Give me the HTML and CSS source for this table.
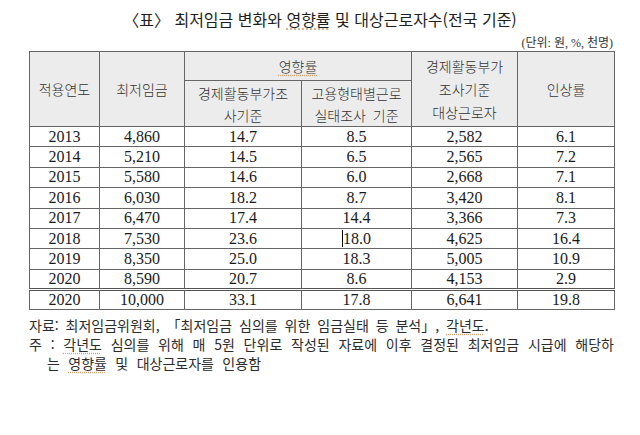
FILE: index.html
```html
<!DOCTYPE html>
<html lang="ko">
<head>
<meta charset="utf-8">
<link rel="stylesheet" href="styles.css">
</head>
<body>
<div class="page">
  <h1 class="title">〈표〉 최저임금 변화와 <span class="sp">영향률</span> 및 대상근로자수(전국 기준)</h1>
  <div class="unit">(단위: 원, %, 천명)</div>
  <table class="data">
    <colgroup>
      <col class="c1"><col class="c2"><col class="c3"><col class="c4"><col class="c5"><col class="c6">
    </colgroup>
    <thead>
      <tr class="h1">
        <th rowspan="2">적용연도</th>
        <th rowspan="2">최저임금</th>
        <th colspan="2"><span class="sp">영향률</span></th>
        <th rowspan="2">경제활동부가<br>조사기준<br>대상근로자</th>
        <th rowspan="2">인상률</th>
      </tr>
      <tr class="h2">
        <th>경제활동부가조<br>사기준</th>
        <th>고용형태별근로<br>실태조사 기준</th>
      </tr>
    </thead>
    <tbody>
      <tr><td>2013</td><td>4,860</td><td>14.7</td><td>8.5</td><td>2,582</td><td>6.1</td></tr>
      <tr><td>2014</td><td>5,210</td><td>14.5</td><td>6.5</td><td>2,565</td><td>7.2</td></tr>
      <tr><td>2015</td><td>5,580</td><td>14.6</td><td>6.0</td><td>2,668</td><td>7.1</td></tr>
      <tr><td>2016</td><td>6,030</td><td>18.2</td><td>8.7</td><td>3,420</td><td>8.1</td></tr>
      <tr><td>2017</td><td>6,470</td><td>17.4</td><td>14.4</td><td>3,366</td><td>7.3</td></tr>
      <tr><td>2018</td><td>7,530</td><td>23.6</td><td><span class="caret"></span>18.0</td><td>4,625</td><td>16.4</td></tr>
      <tr><td>2019</td><td>8,350</td><td>25.0</td><td>18.3</td><td>5,005</td><td>10.9</td></tr>
      <tr><td>2020</td><td>8,590</td><td>20.7</td><td>8.6</td><td>4,153</td><td>2.9</td></tr>
      <tr class="last"><td>2020</td><td>10,000</td><td>33.1</td><td>17.8</td><td>6,641</td><td>19.8</td></tr>
    </tbody>
  </table>
  <div class="notes">
    <p class="note src">자료: 최저임금위원회, 「최저임금 심의를 위한 임금실태 등 분석」, <span class="sp">각년도</span>.</p>
    <p class="note hang">주 : <span class="sp">각년도</span> 심의를 위해 매 5원 단위로 작성된 자료에 이후 결정된 최저임금 시급에 해당하는 <span class="sp">영향률</span> 및 대상근로자를 인용함</p>
  </div>
</div>
</body>
</html>
```

FILE: styles.css
```css
* { box-sizing: border-box; }
html, body { margin: 0; padding: 0; background: #ffffff; }
body {
  width: 640px;
  height: 435px;
  overflow: hidden;
  font-family: "Noto Sans CJK KR", "Noto Sans", sans-serif;
  color: #2a2a2a;
}
.page { padding-top: 8px; }
.title {
  margin: 0;
  font-size: 16px;
  font-weight: 400;
  line-height: 22px;
  text-align: center;
  color: #1e1e1e;
}
.sp {
  text-decoration: underline dotted #d9a070;
  text-underline-offset: 3px;
}
.unit {
  margin-top: 5px;
  padding-right: 27px;
  text-align: right;
  font-family: "Liberation Serif", "Noto Sans CJK KR", serif;
  font-size: 12px;
  line-height: 16px;
  color: #333;
}
.data {
  margin-left: 29px;
  width: 585px;
  border-collapse: collapse;
  table-layout: fixed;
  border: 1px solid #555;
}
.c1 { width: 70px; }
.c2 { width: 85px; }
.c3 { width: 117px; }
.c4 { width: 110px; }
.c5 { width: 106px; }
.c6 { width: 97px; }
.data th, .data td {
  border: 1px solid #666;
  padding: 0;
  text-align: center;
}
.data th {
  background: #ececec;
  font-weight: 300;
  font-size: 14px;
  line-height: 23px;
  word-spacing: 3px;
  color: #333;
}
.h1 { height: 29px; }
.h2 { height: 46px; }
.h2 th { line-height: 22px; }
.data td {
  font-family: "Liberation Serif", serif;
  font-size: 16px;
  line-height: 18px;
  height: 20.4px;
  color: #1a1a1a;
}
.data tr.last td {
  border-top: 3px double #555;
  height: 19px;
}
.caret {
  display: inline-block;
  width: 0;
  height: 17px;
  border-left: 1px solid #000;
  vertical-align: -3px;
}
.notes {
  margin: 6px 0 0 29px;
  width: 585px;
}
.note {
  margin: 0;
  font-size: 14px;
  line-height: 19px;
  color: #2c2c2c;
  text-align: justify;
  word-break: break-all;
}
.src { word-spacing: 3px; }
.hang {
  word-spacing: 4.5px;
  padding-left: 18px;
  text-indent: -18px;
}
```
